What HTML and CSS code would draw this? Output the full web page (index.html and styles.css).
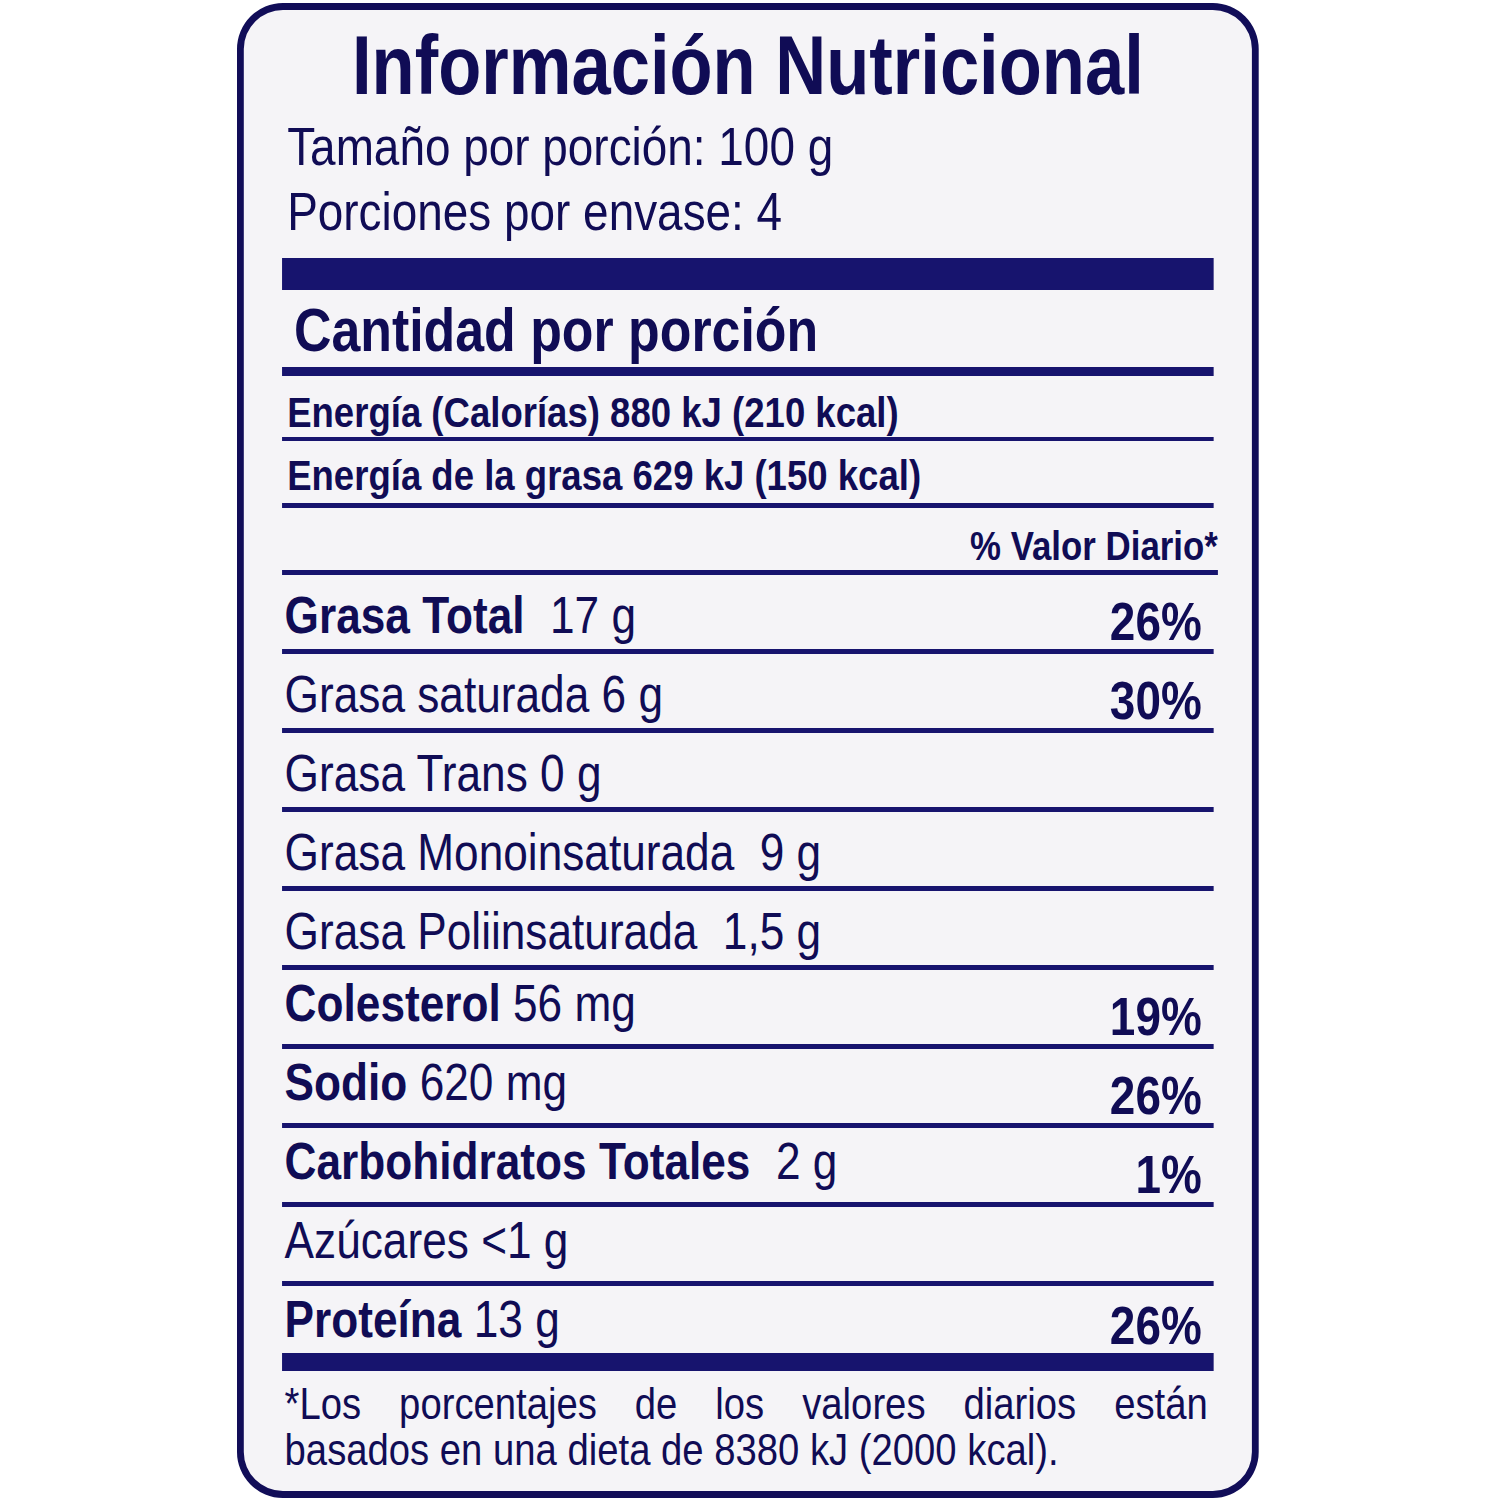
FILE: index.html
```html
<!DOCTYPE html>
<html lang="es">
<head>
<meta charset="utf-8">
<title>Información Nutricional</title>
<link rel="stylesheet" href="styles.css">
</head>
<body>
<div class="label">
  <h1 class="title">Información Nutricional</h1>
  <p class="serving">Tamaño por porción: 100 g</p>
  <p class="serving">Porciones por envase: 4</p>
  <div class="bar-thick"></div>
  <div class="amount">Cantidad por porción</div>
  <div class="energy energy-first">Energía (Calorías) 880 kJ (210 kcal)</div>
  <div class="energy energy-second">Energía de la grasa 629 kJ (150 kcal)</div>
  <div class="dv-head">% Valor Diario*</div>

  <div class="row"><span class="name"><b>Grasa Total</b><span class="gap">17 g</span></span><span class="pct">26%</span></div>
  <div class="row"><span class="name">Grasa saturada 6 g</span><span class="pct">30%</span></div>
  <div class="row"><span class="name">Grasa Trans 0 g</span></div>
  <div class="row"><span class="name">Grasa Monoinsaturada<span class="gap">9 g</span></span></div>
  <div class="row"><span class="name">Grasa Poliinsaturada<span class="gap">1,5 g</span></span></div>
  <div class="row lift"><span class="name"><b>Colesterol</b> 56 mg</span><span class="pct">19%</span></div>
  <div class="row lift"><span class="name"><b>Sodio</b> 620 mg</span><span class="pct">26%</span></div>
  <div class="row lift"><span class="name"><b>Carbohidratos Totales</b><span class="gap">2 g</span></span><span class="pct">1%</span></div>
  <div class="row lift"><span class="name">Azúcares &lt;1 g</span></div>
  <div class="row lift last"><span class="name"><b>Proteína</b> 13 g</span><span class="pct">26%</span></div>

  <div class="bar-bottom"></div>
  <p class="footnote"><span class="fn-first">*Los porcentajes de los valores diarios están</span> <span class="fn-second">basados en una dieta de 8380 kJ (2000 kcal).</span></p>
</div>
</body>
</html>
```

FILE: styles.css
```css
html, body {
  margin: 0;
  background: #ffffff;
}

body {
  padding: 3px 0 0 237px;
  font-family: "Liberation Sans", Arial, sans-serif;
  color: #100c55;
}

/* The printed label uses a condensed face; Liberation Sans is compressed horizontally to match. */
.label {
  box-sizing: border-box;
  width: 1202px;
  height: 1495px;
  border: 7px solid #110d58;
  border-left-width: 8px;
  border-right-width: 8px;
  border-radius: 54px / 46px;
  background: #f5f4f7;
  padding: 0 45px;
  transform: scaleX(0.85);
  transform-origin: 0 0;
}

.title {
  margin: 0;
  padding-top: 14px;
  font-size: 83px;
  line-height: 84px;
  font-weight: 700;
  text-align: center;
  white-space: nowrap;
}

.serving {
  margin: 0;
  padding-left: 6px;
  font-size: 54px;
  line-height: 65px;
}

.title + .serving {
  margin-top: 6px;
}

.bar-thick {
  margin-top: 14px;
  height: 32px;
  background: #17146e;
}

.amount {
  box-sizing: border-box;
  height: 86px;
  padding: 5px 0 0 14px;
  font-size: 61px;
  line-height: 70px;
  font-weight: 700;
  border-bottom: 9px solid #17146e;
}

.energy {
  box-sizing: border-box;
  padding-left: 6px;
  font-size: 43px;
  line-height: 50px;
  font-weight: 700;
}

.energy-first {
  height: 65px;
  padding-top: 11px;
  border-bottom: 4px solid #17146e;
}

.energy-second {
  height: 67px;
  padding-top: 9px;
  border-bottom: 5px solid #17146e;
}

.dv-head {
  box-sizing: border-box;
  height: 67px;
  padding-top: 15px;
  margin-right: -5px;
  font-size: 41px;
  line-height: 46px;
  font-weight: 700;
  text-align: right;
  border-bottom: 5px solid #17146e;
}

.row {
  box-sizing: border-box;
  height: 79px;
  display: flex;
  justify-content: space-between;
  align-items: flex-start;
  padding: 10px 14px 0 3px;
  border-bottom: 5px solid #17146e;
}

.row.lift {
  padding-top: 3px;
}

.row.last {
  height: 67px;
  border-bottom: none;
}

.name {
  font-size: 52px;
  line-height: 60px;
  white-space: nowrap;
}

.name b {
  font-weight: 700;
}

.gap {
  margin-left: 30px;
}

.pct {
  align-self: flex-end;
  padding-bottom: 5px;
  font-size: 54px;
  line-height: 46px;
  font-weight: 700;
}

.bar-bottom {
  height: 18px;
  background: #17146e;
}

.footnote {
  margin: 0;
  padding: 10px 7px 0 3px;
  font-size: 45px;
  line-height: 46px;
}

.fn-first {
  display: block;
  text-align: justify;
  text-align-last: justify;
}

.fn-second {
  display: block;
}
```
